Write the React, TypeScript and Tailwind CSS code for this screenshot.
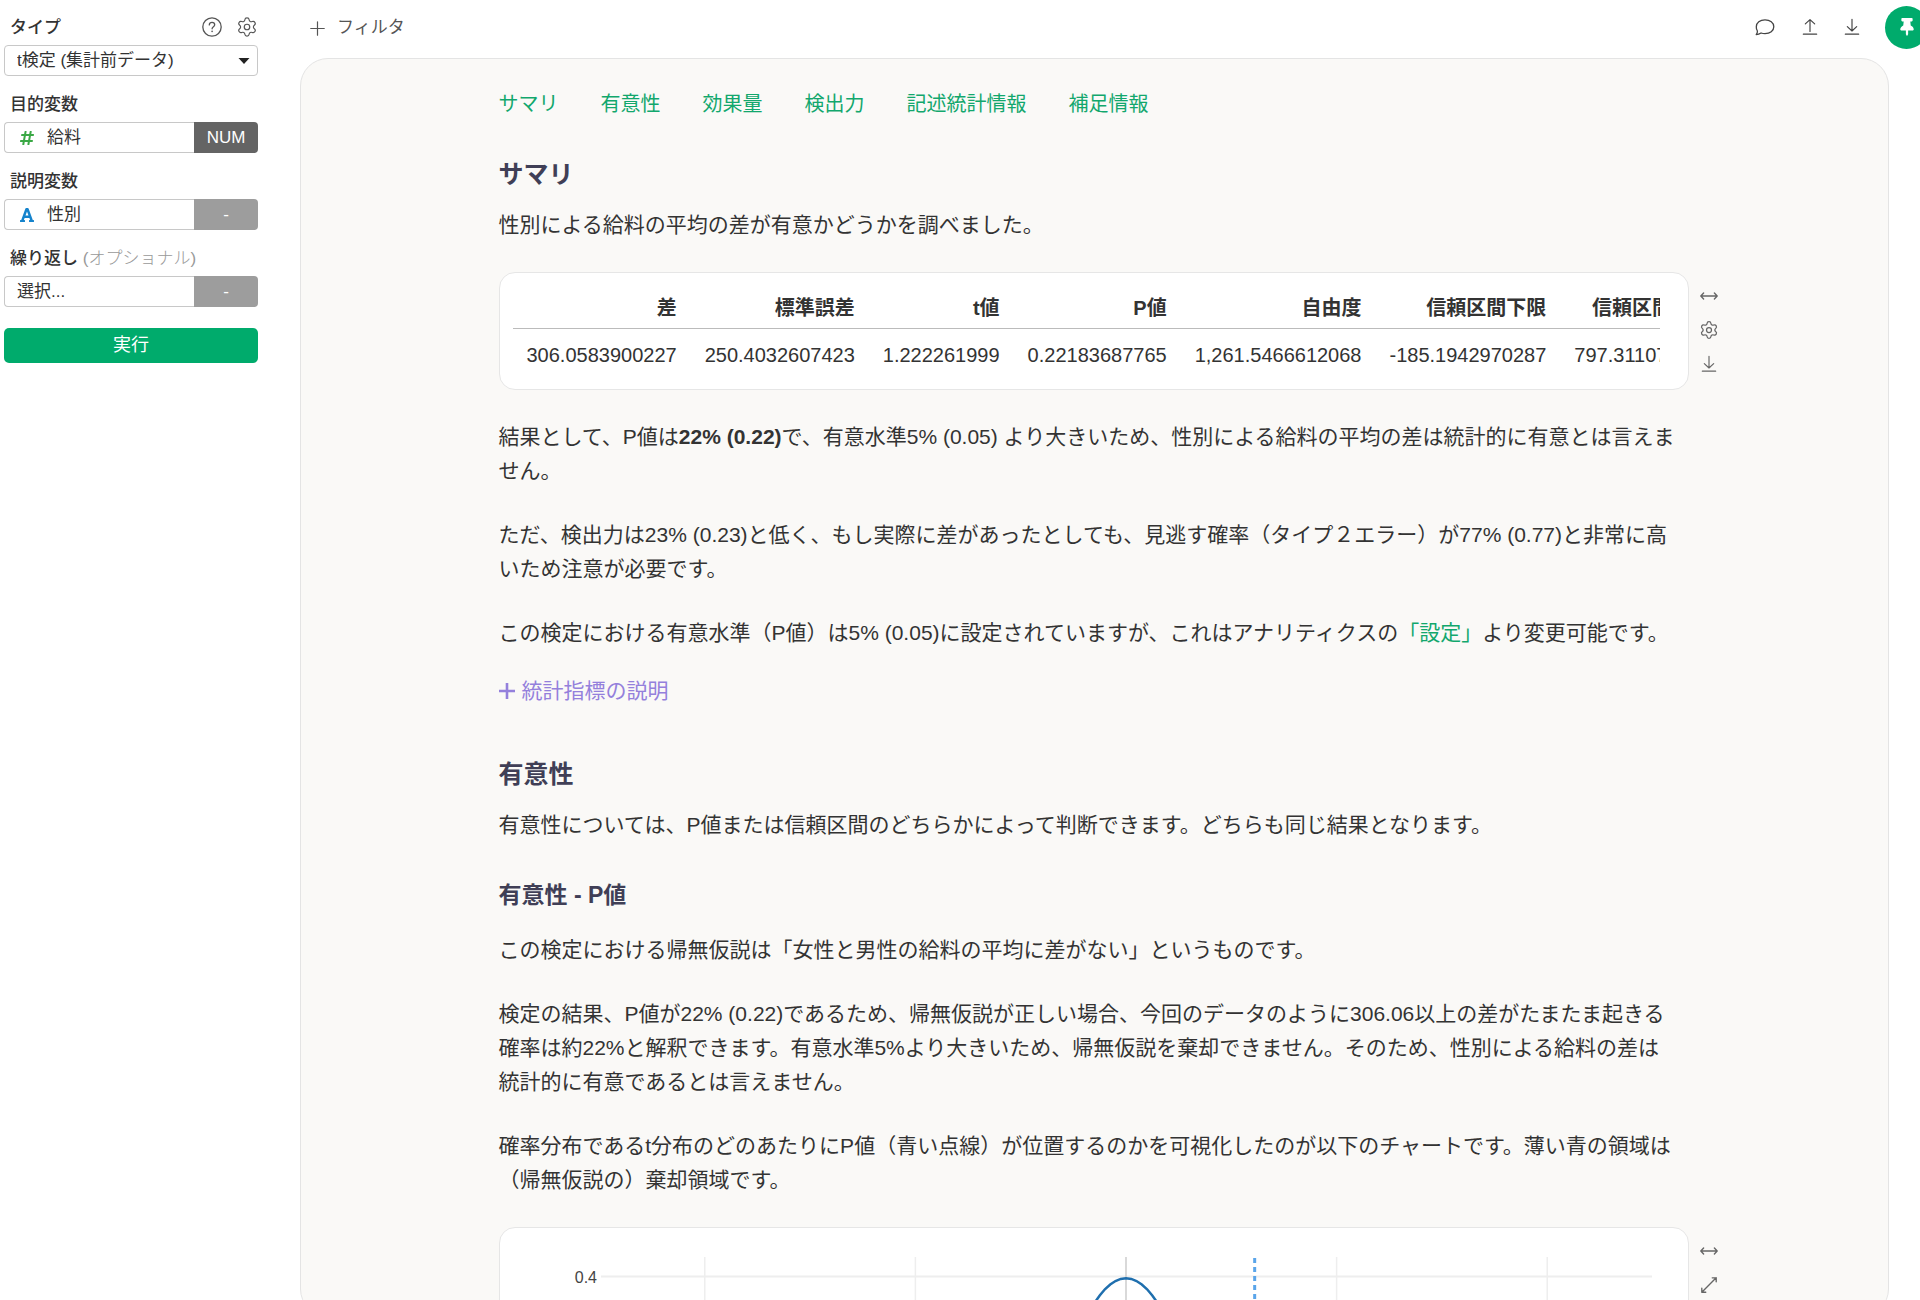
import React from "react";
import { Settings } from "lucide-react";
import { FaFont, FaHashtag, FaThumbtack } from "react-icons/fa";

const NAV_ITEMS = [
  { id: "summary", label: "サマリ" },
  { id: "significance", label: "有意性" },
  { id: "effect", label: "効果量" },
  { id: "power", label: "検出力" },
  { id: "stats", label: "記述統計情報" },
  { id: "notes", label: "補足情報" },
];

const COLUMNS = [
  { name: "差", value: "306.0583900227" },
  { name: "標準誤差", value: "250.4032607423" },
  { name: "t値", value: "1.222261999" },
  { name: "P値", value: "0.22183687765" },
  { name: "自由度", value: "1,261.5466612068" },
  { name: "信頼区間下限", value: "-185.1942970287" },
  { name: "信頼区間上限", value: "797.311077074" },
];

type IconProps = { className?: string };

function Icon({ className = "size-[18px]", children }: IconProps & { children: React.ReactNode }) {
  return (
    <svg
      viewBox="0 0 20 20"
      className={className}
      fill="none"
      stroke="currentColor"
      strokeWidth="1.3"
      strokeLinecap="round"
      strokeLinejoin="round"
      aria-hidden="true"
    >
      {children}
    </svg>
  );
}

const HelpIcon = ({ className }: IconProps) => (
  <Icon className={className}>
    <circle cx="10" cy="10" r="9.2" />
    <path d="M7.3 7.9c0-1.6 1.2-2.6 2.7-2.6s2.7 1 2.7 2.4c0 1.9-2.6 2-2.6 4.1" />
    <path d="M10.1 14.3v.2" strokeWidth="1.6" />
  </Icon>
);

const DownloadIcon = ({ className }: IconProps) => (
  <Icon className={className}>
    <path d="M10 1.5v12.8M4.8 9.6l5.2 4.8 5.2-4.8M2.6 18h14.8" />
  </Icon>
);

const UploadIcon = ({ className }: IconProps) => (
  <Icon className={className}>
    <path d="M10 15V2M4.8 6.6L10 1.8l5.2 4.8M2.6 18h14.8" />
  </Icon>
);

const CommentIcon = ({ className }: IconProps) => (
  <Icon className={className}>
    <path d="M1.2 17.6c.9-1 1.3-2.2 1.2-3.6A6.6 6.6 0 0 1 1.3 9.8c0-4 3.7-6.9 8.7-6.9s8.8 2.9 8.8 6.9-3.8 6.8-8.8 6.8c-1.4 0-2.7-.2-3.9-.6-1.3.9-3 1.6-4.9 1.6z" />
  </Icon>
);

const WidthIcon = ({ className }: IconProps) => (
  <Icon className={className}>
    <path d="M1 10h18M4 6.6L.9 10 4 13.4M16 6.6l3.1 3.4-3.1 3.4" strokeWidth="1.5" />
  </Icon>
);

const ExpandIcon = ({ className }: IconProps) => (
  <Icon className={className}>
    <path d="M2 18L18 2M13.6 2H18v4.4M2 13.6V18h4.4" strokeWidth="1.5" />
  </Icon>
);

const PlusIcon = ({ className }: IconProps) => (
  <Icon className={className}>
    <path d="M10 1v18M1 10h18" strokeWidth="1.6" />
  </Icon>
);

function Label({ htmlFor, children }: { htmlFor: string; children: React.ReactNode }) {
  return (
    <div className="flex h-[46px] items-center pt-3 pl-1.5 text-[17px]">
      <label htmlFor={htmlFor} className="font-medium text-[#333333]">{children}</label>
    </div>
  );
}

function VariableField({ id, value, badge, dark = false, icon }: {
  id: string;
  value: string;
  badge: string;
  dark?: boolean;
  icon?: React.ReactNode;
}) {
  return (
    <div className="flex h-[31px] text-[17px]">
      <button
        id={id}
        type="button"
        className="flex flex-1 items-center gap-[11px] rounded-l-[4px] border border-r-0 border-[#c8c8c8] bg-white pl-3 text-left"
      >
        {icon && <span className="flex w-[19px] justify-center">{icon}</span>}
        {value}
      </button>
      <button
        type="button"
        className={dark
          ? "w-[64px] rounded-r-[4px] bg-[#646464] text-white"
          : "w-[64px] rounded-r-[4px] bg-[#9d9d9d] text-white"}
      >
        {badge}
      </button>
    </div>
  );
}

function Sidebar() {
  return (
    <aside className="w-[300px] shrink-0 pl-1 pr-[42px]">
      <div className="flex h-[45px] items-center justify-between pt-2 pl-1.5 text-[17px]">
        <label htmlFor="type" className="pt-0.5 font-medium text-[#333333]">タイプ</label>
        <div className="flex items-center gap-3.5 text-[#555555]">
          <button type="button" aria-label="ヘルプ"><HelpIcon className="size-5" /></button>
          <button type="button" aria-label="設定"><Settings className="size-[22px]" strokeWidth={1.3} /></button>
        </div>
      </div>
      <div className="relative">
        <select
          id="type"
          className="block h-[31px] w-full appearance-none rounded-[4px] border border-[#c8c8c8] bg-white pl-3 text-[17px]"
        >
          <option>t検定 (集計前データ)</option>
        </select>
        <svg viewBox="0 0 12 6" className="pointer-events-none absolute top-[13px] right-2 h-1.5 w-3" aria-hidden="true">
          <path d="M0.5 0h11L6 6z" fill="#222222" />
        </svg>
      </div>

      <Label htmlFor="target">目的変数</Label>
      <VariableField
        id="target"
        value="給料"
        badge="NUM"
        dark
        icon={<FaHashtag className="size-4 text-[#3aa845]" />}
      />

      <Label htmlFor="explain">説明変数</Label>
      <VariableField
        id="explain"
        value="性別"
        badge="-"
        icon={<FaFont className="size-4 text-[#1583cc]" />}
      />

      <Label htmlFor="repeat">
        繰り返し <span className="font-light text-[#999999]">(オプショナル)</span>
      </Label>
      <VariableField id="repeat" value="選択..." badge="-" />

      <button type="button" className="mt-[21px] h-[35px] w-full rounded-[5px] bg-[#00ab6c] text-[18px] text-white">
        実行
      </button>
    </aside>
  );
}

function Toolbar() {
  return (
    <header className="flex h-[58px] shrink-0 items-center justify-between pb-1 text-[#444444]">
      <button type="button" className="flex items-center gap-3 pt-0.5 pl-2.5 text-[17px] text-[#555555]">
        <PlusIcon className="size-[15px]" />
        フィルタ
      </button>
      <div className="flex items-center gap-6">
        <button type="button" aria-label="コメント" className="pr-0.5"><CommentIcon className="size-5" /></button>
        <button type="button" aria-label="アップロード"><UploadIcon /></button>
        <button type="button" aria-label="ダウンロード"><DownloadIcon /></button>
        <button
          type="button"
          aria-label="ピン留め"
          className="-mr-2 flex size-[43px] items-center justify-center rounded-full bg-[#00ab6c] text-white"
        >
          <FaThumbtack className="size-[18px]" />
        </button>
      </div>
    </header>
  );
}

function Card({ tools, children }: { tools: React.ReactNode; children: React.ReactNode }) {
  return (
    <div className="-mr-10 mb-[30px] flex">
      <div className="min-w-0 flex-1 rounded-2xl border border-[#e6e6e6] bg-white">{children}</div>
      <div className="flex w-10 flex-col items-center gap-3.5 pt-3.5 text-[#666666]">{tools}</div>
    </div>
  );
}

function ToolButton({ label, children }: { label: string; children: React.ReactNode }) {
  return (
    <button type="button" aria-label={label} className="flex size-5 items-center justify-center">
      {children}
    </button>
  );
}

function ResultTable() {
  return (
    <div className="mr-7 ml-[13px] overflow-hidden pt-[15px] pb-[7px]">
      <table className="border-collapse text-right text-[20px] whitespace-nowrap">
        <thead>
          <tr className="h-10 border-b border-[#bbbbbb]">
            {COLUMNS.map((col) => (
              <th key={col.name} className="px-3.5 font-bold">{col.name}</th>
            ))}
          </tr>
        </thead>
        <tbody>
          <tr className="h-[54px]">
            {COLUMNS.map((col) => (
              <td key={col.name} className="px-3.5">{col.value}</td>
            ))}
          </tr>
        </tbody>
      </table>
    </div>
  );
}

// Chart geometry
const CENTER_X = 626;
const UNIT_X = 105.3;
const BASE_Y = 615;
const UNIT_Y = 1416;

const density = (t: number) => 0.3989 * Math.exp((-t * t) / 2);
const px = (t: number) => CENTER_X + t * UNIT_X;
const py = (d: number) => BASE_Y - d * UNIT_Y;

function curve(from: number, to: number) {
  const points: string[] = [];
  for (let t = from; t <= to + 0.001; t += 0.05) {
    points.push(`${px(t).toFixed(1)},${py(density(t)).toFixed(1)}`);
  }
  return points.join(" ");
}

function DistributionChart() {
  return (
    <svg viewBox="0 0 1188 680" className="block w-full" role="img" aria-label="t分布">
      {[0, 0.1, 0.2, 0.3, 0.4].map((d) => (
        <g key={d}>
          <line x1="101" x2="1152" y1={py(d)} y2={py(d)} stroke="#eeeeee" strokeWidth="2" />
          <text x="97" y={py(d) + 6} textAnchor="end" fontSize="16" fill="#444444">{d}</text>
        </g>
      ))}
      {[-4, -2, 0, 2, 4].map((t) => (
        <line key={t} x1={px(t)} x2={px(t)} y1="29" y2={BASE_Y} stroke={t === 0 ? "#cccccc" : "#eeeeee"} strokeWidth="1.5" />
      ))}
      <polygon points={`${px(-4.9)},${BASE_Y} ${curve(-4.9, -1.95)} ${px(-1.95)},${BASE_Y}`} fill="#cfe4f5" />
      <polygon points={`${px(1.95)},${BASE_Y} ${curve(1.95, 4.9)} ${px(4.9)},${BASE_Y}`} fill="#cfe4f5" />
      <polyline points={curve(-4.9, 4.9)} fill="none" stroke="#1f6fae" strokeWidth="2.5" />
      <line x1={px(1.222)} x2={px(1.222)} y1="30" y2={BASE_Y} stroke="#5aa5ea" strokeWidth="3" strokeDasharray="5 4" />
    </svg>
  );
}

export default function App() {
  return (
    <div
      lang="ja"
      className="flex h-screen overflow-hidden bg-white font-['Liberation_Sans','Noto_Sans_CJK_JP',sans-serif] text-[#333333]"
    >
      <Sidebar />

      <div className="flex min-w-0 flex-1 flex-col">
        <Toolbar />

        <main className="-mb-[17px] mr-[31px] min-h-0 flex-1 overflow-hidden rounded-[28px] border border-[#e4e4e4] bg-[#faf9f7] pt-[30px] pr-0.5">
          <div className="mx-auto max-w-[1190px] text-[21px] leading-[34px]">
            <nav className="mb-[37px] flex gap-[42px] text-[20px] leading-[30px] text-[#12a76d]">
              {NAV_ITEMS.map((item) => (
                <a key={item.id} href={`#${item.id}`}>{item.label}</a>
              ))}
            </nav>

            {/* Summary */}
            <section id="summary">
              <h2 className="mb-4 text-[25px] leading-9 font-bold text-[#403f56]">サマリ</h2>
              <p className="mb-[30px]">性別による給料の平均の差が有意かどうかを調べました。</p>

              <Card tools={
                <>
                  <ToolButton label="幅"><WidthIcon /></ToolButton>
                  <ToolButton label="表の設定"><Settings className="size-5" strokeWidth={1.5} /></ToolButton>
                  <ToolButton label="表のダウンロード"><DownloadIcon /></ToolButton>
                </>
              }>
                <ResultTable />
              </Card>

              <div className="space-y-[30px] pr-3">
                <p>
                  結果として、P値は<b>22% (0.22)</b>で、有意水準5% (0.05) より大きいため、性別による給料の平均の差は統計的に有意とは言えません。
                </p>
                <p>
                  ただ、検出力は23% (0.23)と低く、もし実際に差があったとしても、見逃す確率（タイプ２エラー）が77% (0.77)と非常に高いため注意が必要です。
                </p>
                <p>
                  この検定における有意水準（P値）は5% (0.05)に設定されていますが、これはアナリティクスの<a href="#settings" className="text-[#12a76d]">「設定」</a>より変更可能です。
                </p>
              </div>
              <button type="button" className="mt-6 flex items-center gap-[7px] text-[#9480dc]">
                <svg viewBox="0 0 16 16" className="size-4" stroke="currentColor" strokeWidth="2.6" aria-hidden="true">
                  <path d="M8 0v16M0 8h16" />
                </svg>
                統計指標の説明
              </button>
            </section>

            {/* Significance */}
            <section id="significance" className="mt-12">
              <h2 className="mb-4 text-[25px] leading-9 font-bold text-[#403f56]">有意性</h2>
              <p>有意性については、P値または信頼区間のどちらかによって判断できます。どちらも同じ結果となります。</p>

              <h3 className="mt-9 mb-[21px] text-[23px] font-bold text-[#403f56]">有意性 - P値</h3>
              <div className="mb-[30px] space-y-[30px] pr-3">
                <p>この検定における帰無仮説は「女性と男性の給料の平均に差がない」というものです。</p>
                <p>
                  検定の結果、P値が22% (0.22)であるため、帰無仮説が正しい場合、今回のデータのように306.06以上の差がたまたま起きる確率は約22%と解釈できます。有意水準5%より大きいため、帰無仮説を棄却できません。そのため、性別による給料の差は統計的に有意であるとは言えません。
                </p>
                <p>
                  確率分布であるt分布のどのあたりにP値（青い点線）が位置するのかを可視化したのが以下のチャートです。薄い青の領域は（帰無仮説の）棄却領域です。
                </p>
              </div>

              <Card tools={
                <>
                  <ToolButton label="幅"><WidthIcon /></ToolButton>
                  <ToolButton label="拡大"><ExpandIcon /></ToolButton>
                </>
              }>
                <DistributionChart />
              </Card>
            </section>
          </div>
        </main>
      </div>
    </div>
  );
}
